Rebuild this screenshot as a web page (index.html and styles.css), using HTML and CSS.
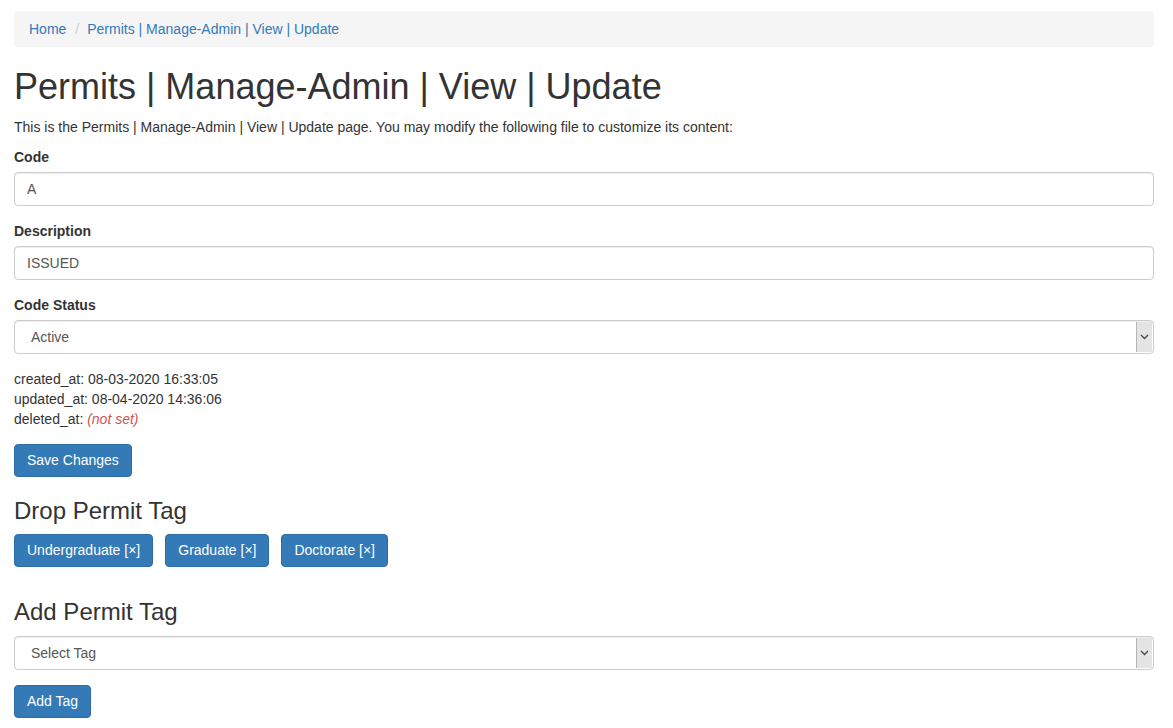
FILE: index.html
```html
<!DOCTYPE html>
<html>
<head>
<meta charset="utf-8">
<link rel="stylesheet" href="styles.css">
</head>
<body>
<div class="container">
  <ul class="breadcrumb">
    <li><a href="#">Home</a></li>
    <li class="active"><a href="#">Permits | Manage-Admin | View | Update</a></li>
  </ul>
  <h1>Permits | Manage-Admin | View | Update</h1>
  <p>This is the Permits | Manage-Admin | View | Update page. You may modify the following file to customize its content:</p>
  <form>
    <div class="form-group">
      <label class="control-label">Code</label>
      <input class="form-control" type="text" value="A">
    </div>
    <div class="form-group">
      <label class="control-label">Description</label>
      <input class="form-control" type="text" value="ISSUED">
    </div>
    <div class="form-group">
      <label class="control-label">Code Status</label>
      <div class="select-wrap">
        <select class="form-control select"><option>Active</option></select>
        <span class="select-arrow"><svg width="9" height="6" viewBox="0 0 9 6"><path d="M1 1 L4.5 4.5 L8 1" fill="none" stroke="#444" stroke-width="1.3"/></svg></span>
      </div>
    </div>
    <div class="meta">
      <div>created_at: 08-03-2020 16:33:05</div>
      <div>updated_at: 08-04-2020 14:36:06</div>
      <div>deleted_at: <span class="not-set">(not set)</span></div>
    </div>
    <button type="button" class="btn">Save Changes</button>
  </form>
  <h3 class="drop-title">Drop Permit Tag</h3>
  <div class="tags">
    <button type="button" class="btn">Undergraduate [×]</button>
    <button type="button" class="btn">Graduate [×]</button>
    <button type="button" class="btn">Doctorate [×]</button>
  </div>
  <h3 class="add-title">Add Permit Tag</h3>
  <div class="form-group add-group">
    <div class="select-wrap">
      <select class="form-control select"><option>Select Tag</option></select>
      <span class="select-arrow"><svg width="9" height="6" viewBox="0 0 9 6"><path d="M1 1 L4.5 4.5 L8 1" fill="none" stroke="#444" stroke-width="1.3"/></svg></span>
    </div>
  </div>
  <button type="button" class="btn">Add Tag</button>
</div>
</body>
</html>
```
FILE: styles.css
```css
* { box-sizing: border-box; }
html, body { margin: 0; padding: 0; background: #fff; }
body {
  font-family: "Liberation Sans", Arial, Helvetica, sans-serif;
  font-size: 14px;
  line-height: 20px;
  color: #333;
}
.container {
  padding: 11px 19px 20px 14px;
}
.breadcrumb {
  list-style: none;
  margin: 0 0 20px;
  padding: 8px 15px;
  background: #f5f5f5;
  border-radius: 4px;
  display: flex;
}
.breadcrumb li + li::before {
  content: "/";
  padding: 0 8px 0 9px;
  color: #ccc;
}
a { color: #337ab7; text-decoration: none; }
h1 {
  font-size: 36px;
  font-weight: 500;
  line-height: 1.1;
  margin: 20px 0 10px;
}
h3 {
  font-size: 24px;
  font-weight: 500;
  line-height: 1.1;
  margin: 20px 0 10px;
}
p { margin: 0 0 10px; }
label {
  display: block;
  font-weight: bold;
  margin-bottom: 5px;
}
.form-group { margin-bottom: 15px; }
.form-control {
  display: block;
  width: 100%;
  height: 34px;
  padding: 6px 12px;
  font-family: inherit;
  font-size: 14px;
  line-height: 20px;
  color: #555;
  background: #fff;
  border: 1px solid #ccc;
  border-radius: 4px;
  box-shadow: inset 0 1px 1px rgba(0,0,0,0.075);
}
.select-wrap { position: relative; }
.select {
  -webkit-appearance: none;
  appearance: none;
  padding-left: 16px;
}
.select-arrow {
  position: absolute;
  right: 2px;
  top: 2px;
  bottom: 2px;
  width: 16px;
  background: #e4e4e4;
  border-left: 1px solid #b5b5b5;
  display: flex;
  align-items: center;
  justify-content: center;
}
.meta { margin-bottom: 15px; }
.not-set { color: #c55; font-style: italic; }
.btn {
  display: inline-block;
  padding: 6px 12px;
  font-family: inherit;
  font-size: 14px;
  line-height: 19px;
  color: #fff;
  background: #337ab7;
  border: 1px solid #2e6da4;
  border-radius: 4px;
  cursor: pointer;
}
.drop-title { margin-top: 21px; }
.tags { display: flex; gap: 12px; }
.add-title { margin-top: 32px; margin-bottom: 11px; }
.add-group { margin-bottom: 15px; }
```
